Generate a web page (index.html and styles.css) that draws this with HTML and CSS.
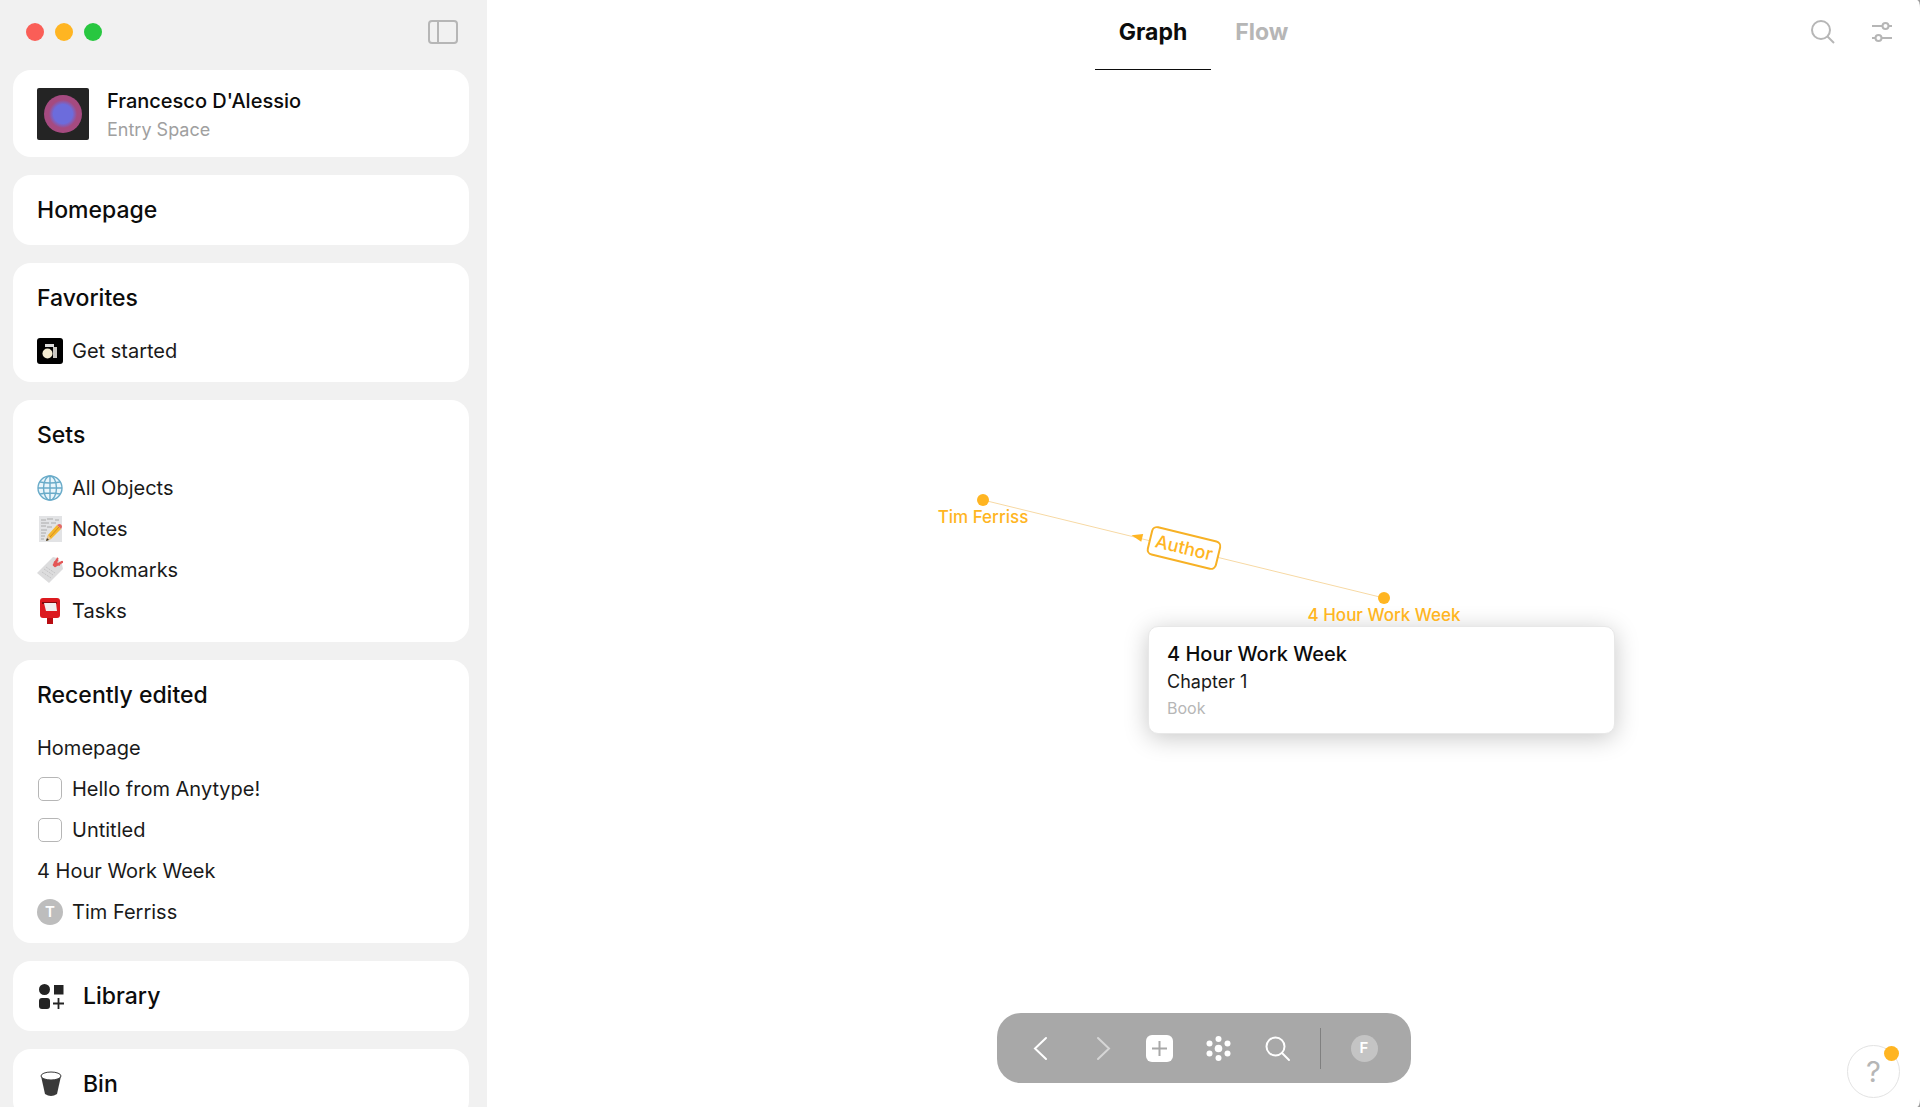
FILE: index.html
```
<!DOCTYPE html>
<html lang="en">
<head>
<meta charset="UTF-8">
<meta name="viewport" content="width=device-width, initial-scale=1.0">
<title>Graph</title>
<link rel="stylesheet" href="styles.css">
</head>
<body>
<div id="app">
    <aside class="sidebar">
        <div class="titlebar">
            <div class="lights">
                <button class="light red" aria-label="Close"></button>
                <button class="light yellow" aria-label="Minimize"></button>
                <button class="light green" aria-label="Zoom"></button>
            </div>
            <button class="toggle" aria-label="Toggle sidebar">
                <svg width="30" height="24" viewBox="0 0 30 24" fill="none" stroke="#b6b6b6" stroke-width="2"><rect x="1" y="1" width="28" height="22" rx="3"/><path d="M10 1v22"/></svg>
            </button>
        </div>
        <a href="#" class="card profile">
            <svg width="52" height="52" viewBox="0 0 52 52">
                <defs>
                    <radialGradient id="orb">
                        <stop offset=".5" stop-color="#6c6cdc"/>
                        <stop offset=".74" stop-color="#a54a80"/>
                    </radialGradient>
                </defs>
                <rect width="52" height="52" rx="2" fill="#242424"/>
                <circle cx="26" cy="26" r="19" fill="url(#orb)"/>
            </svg>
            <span class="who">
                <span class="name">Francesco D'Alessio</span>
                <span class="space">Entry Space</span>
            </span>
        </a>
        <section class="card">
            <h2><a href="#">Homepage</a></h2>
        </section>
        <section class="card list">
            <h2>Favorites</h2>
            <ul>
                <li><a href="#">
                    <svg width="26" height="26" viewBox="0 0 26 26"><rect width="26" height="26" rx="3"/><path d="M8 6h9v4H8z" fill="#ddd"/><path d="M16 9h4v11h-4z" fill="#c9c7c2"/><path d="M8 9h8v3H8z"/><circle cx="10.500" cy="15.500" r="5" fill="#f5ecd2"/></svg>
                    Get started</a></li>
            </ul>
        </section>
        <section class="card list">
            <h2>Sets</h2>
            <ul>
                <li><a href="#">
                    <svg width="26" height="26" viewBox="0 0 26 26" fill="none" stroke="#69abc9" stroke-width="1.400"><circle cx="13" cy="13" r="12" fill="#e9f5fb"/><ellipse cx="13" cy="13" rx="6.500" ry="12"/><path d="M13 1v24M1 13h24M3 7q10 2 20 0M3 19q10-2 20 0"/></svg>
                    All Objects</a></li>
                <li><a href="#">
                    <svg width="26" height="26" viewBox="0 0 26 26"><path d="M2 0h23v26H2z" fill="#e2e3e5"/><path d="M4 4h5m1-1h6m2 1h4M4 7h8m2 0h5M4 10h5m1 1h5M4 14h6M4 17h5M4 20h4m-4 3h3" stroke="#aaa" fill="none"/><path d="M9 25l2-6L20 9l4 4-10 10z" fill="#f5b82e"/><path d="M13 21l9-10" stroke="#d78c1c" fill="none"/><path d="M9 25l2-6 3 4z" fill="#e8c797"/><path d="M9 25l1-3 2 2z" fill="#333"/><path d="M20 9l2-1q3 0 3 3l-1 2z" fill="#e26a65"/></svg>
                    Notes</a></li>
                <li><a href="#">
                    <svg width="26" height="26" viewBox="0 0 26 26"><path d="M0 16L16 0l4 1 5 6 1 5-14 14z" fill="#dcdcdd"/><path d="M5 15l9 6M7 12l9 6M9 10l9 6" stroke="#c5c5c7" stroke-dasharray="2 1" fill="none"/><path d="M17 8l3-5M18 9l7-4" stroke="#e45757" stroke-width="2.500" stroke-linecap="round" fill="none"/><path d="M17 5l6 3M20 2l1-1" stroke="#e45757" stroke-width="2" fill="none"/></svg>
                    Bookmarks</a></li>
                <li><a href="#">
                    <svg width="26" height="26" viewBox="0 0 26 26"><path d="M10 18h6v8h-6z" fill="#b80d12"/><path d="M3 3q0-3 3-3h14q3 0 3 3v14q0 3-3 3H6q-3 0-3-3z" fill="#dc1a1f"/><path d="M5 4h15v2H5z" fill="#850a0d"/><path d="M7 5h12l1 8H9z" fill="#f1eeee"/></svg>
                    Tasks</a></li>
            </ul>
        </section>
        <section class="card list">
            <h2>Recently edited</h2>
            <ul>
                <li><a href="#">Homepage</a></li>
                <li><input type="checkbox" id="hello"><label for="hello">Hello from Anytype!</label></li>
                <li><input type="checkbox" id="untitled"><label for="untitled">Untitled</label></li>
                <li><a href="#">4 Hour Work Week</a></li>
                <li><a href="#"><span class="avatar">T</span>Tim Ferriss</a></li>
            </ul>
        </section>
        <section class="card">
            <h2><a href="#">
                <svg width="28" height="28" viewBox="0 0 28 28" fill="#242424"><circle cx="7.500" cy="7.500" r="5.500"/><rect x="17" y="3" width="9.500" height="9.500"/><rect x="2" y="16" width="11" height="11" rx="3"/><path d="M21.500 16v11M16 21.500h11" stroke="#242424" stroke-width="1.800"/></svg>
                Library</a></h2>
        </section>
        <section class="card">
            <h2><a href="#">
                <svg width="28" height="28" viewBox="0 0 28 28"><path d="M4 6l4 18q6 4 12 0l4-18z" fill="#3a3a3a"/><ellipse cx="14" cy="6" rx="10" ry="4" fill="#fff" stroke="#3a3a3a"/></svg>
                Bin</a></h2>
        </section>
    </aside>
    <main class="main">
        <div class="canvas">
            <div class="scene">
                <svg class="edges" width="721" height="261" viewBox="0 0 721 261">
                    <path d="M140 77L541 175" class="edge"/>
                    <circle cx="140" cy="77" r="6"/>
                    <circle cx="541" cy="175" r="6"/>
                    <g transform="translate(341 125) rotate(13.700)">
                        <path d="M-54 0l11-4v8z"/>
                        <rect x="-35" y="-14" width="70" height="28" rx="5" class="tag"/>
                        <text y="6" class="relation">Author</text>
                    </g>
                    <text x="140" y="100" class="label">Tim Ferriss</text>
                </svg>
                <div class="preview">
                    <strong>4 Hour Work Week</strong>
                    <span>Chapter 1</span>
                    <small>Book</small>
                </div>
                <svg class="edges" width="721" height="261" viewBox="0 0 721 261">
                    <text x="541" y="198">4 Hour Work Week</text>
                </svg>
            </div>
        </div>
        <header class="header">
            <nav class="tabs">
                <button class="tab active">Graph</button>
                <button class="tab">Flow</button>
            </nav>
            <div class="tools">
                <button aria-label="Search">
                    <svg width="26" height="26" viewBox="0 0 26 26" fill="none" stroke="#b6b6b6" stroke-width="2"><circle cx="11" cy="11" r="9"/><path d="M17.500 17.500L24 24"/></svg>
                </button>
                <button aria-label="Settings">
                    <svg width="26" height="26" viewBox="0 0 26 26" fill="#fff" stroke="#b6b6b6" stroke-width="2"><path d="M3 7h20M3 19h20"/><circle cx="16.500" cy="7" r="3"/><circle cx="9.500" cy="19" r="3"/></svg>
                </button>
            </div>
        </header>
        <div class="dock">
            <div class="dock-items">
                <button aria-label="Back"><svg width="27" height="27" viewBox="0 0 27 27" fill="none" stroke="#fff" stroke-width="2" stroke-linecap="round"><path d="M18 3L7 13.500 18 24"/></svg></button>
                <button aria-label="Forward" disabled><svg width="27" height="27" viewBox="0 0 27 27" fill="none" stroke="#d6d6d6" stroke-width="2" stroke-linecap="round"><path d="M11 3l11 10.500L11 24"/></svg></button>
                <button aria-label="New object"><svg width="27" height="27" viewBox="0 0 27 27"><rect width="27" height="27" rx="6" fill="#fff"/><path d="M13.500 6v15M6 13.500h15" stroke="#a8a8a8" stroke-width="2"/></svg></button>
                <button aria-label="Graph"><svg width="27" height="27" viewBox="0 0 27 27" fill="#fff"><circle cx="13.500" cy="13.500" r="3.800"/><circle cx="13.500" cy="4" r="3"/><circle cx="13.500" cy="23" r="3"/><circle cx="4.500" cy="8.500" r="3"/><circle cx="22.500" cy="8.500" r="3"/><circle cx="4.500" cy="18.500" r="3"/><circle cx="22.500" cy="18.500" r="3"/></svg></button>
                <button aria-label="Search"><svg width="27" height="27" viewBox="0 0 27 27" fill="none" stroke="#fff" stroke-width="2" stroke-linecap="round"><circle cx="11.500" cy="11.500" r="9"/><path d="M18 18l7 7"/></svg></button>
            </div>
            <span class="divider"></span>
            <button class="avatar me" aria-label="Profile">F</button>
        </div>
        <button class="help" aria-label="Help">?<span class="badge"></span></button>
    </main>
</div>
</body>
</html>
```
FILE: styles.css
```
* {box-sizing: border-box;}
body {margin: 0;background: #9a9a9a;font: 20px/26px Inter, "Liberation Sans", sans-serif;color: #1a1a1a;}
h2,ul {margin: 0;padding: 0;list-style: none;}
svg {display: block;flex: none;}
a {color: inherit;text-decoration: none;}
button {margin: 0;padding: 0;border: 0;background: none;font: inherit;color: inherit;cursor: pointer;}
#app {display: flex;height: 100vh;overflow: hidden;}

/* sidebar */
.sidebar {flex: none;display: flex;flex-direction: column;gap: 18px;width: 487px;padding: 0 18px 18px 13px;background: #f1f1f1;overflow: hidden;}
.titlebar {flex: none;display: flex;justify-content: space-between;align-items: center;height: 52px;padding: 12px 11px 0 13px;}
.lights {display: flex;gap: 11px;}
.light {width: 18px;height: 18px;border-radius: 50%;}
.red {background: #fa5e57;}
.yellow {background: #ffb522;}
.green {background: #28c740;}
.card {flex: none;padding: 22px 24px;border-radius: 18px;background: #fff;}
.card h2 {font-size: 23px;line-height: 26px;font-weight: 550;color: #0c0c0c;}
.card h2 a {display: flex;align-items: center;gap: 18px;height: 26px;}
.profile {display: flex;gap: 18px;padding: 18px 24px 16px;}
.who {display: flex;flex-direction: column;gap: 5px;}
.name {font-weight: 450;color: #0c0c0c;}
.space {font-size: 18px;line-height: 22px;color: #a0a0a0;}
.list {padding-bottom: 11px;}
.list ul {margin-top: 19px;}
.list li,.list li a {display: flex;align-items: center;gap: 9px;height: 41px;}
.list input {appearance: none;width: 24px;height: 24px;margin: 0 1px;border: 1px solid #b6b6b6;border-radius: 5px;background: #fff;}
.avatar {display: flex;justify-content: center;align-items: center;width: 26px;height: 26px;border-radius: 50%;background: #bdbdbd;font-size: 15px;font-weight: 600;color: #fff;}

/* graph */
.main {position: relative;flex: 1;min-width: 0;background: #fff;border-radius: 0 3px 3px 0 / 0 8px 8px 0;}
.header {position: relative;display: flex;justify-content: center;height: 70px;}
.tabs {display: flex;}
.tab {padding: 0 24px 6px;border-bottom: 1px solid transparent;font-size: 23px;font-weight: 650;color: #b6b6b6;}
.tab.active {border-color: #0c0c0c;color: #0c0c0c;}
.tools {position: absolute;right: 25px;top: 19px;display: flex;gap: 33px;}
.canvas {position: absolute;inset: 0;display: grid;place-items: center;overflow: hidden;}
.scene {position: relative;width: 721px;height: 261px;}
.edges {position: absolute;left: 0;top: 0;fill: #ffb522;font-size: 17px;font-weight: 500;text-anchor: middle;}
.edge {fill: none;stroke: #f7d9a4;}
.tag {fill: #fff;stroke: #f7b125;stroke-width: 2;}
.relation {font-size: 18px;}
.label {stroke: #fff;stroke-width: 3;paint-order: stroke;}
.preview {position: absolute;left: 305px;top: 203px;display: flex;flex-direction: column;width: 467px;padding: 14px 18px 12px;border: 1px solid #e8e8e8;border-radius: 10px;background: #fff;box-shadow: 0 4px 24px rgba(0, 0, 0, .22);}
.preview strong {font-weight: 450;line-height: 27px;color: #0c0c0c;}
.preview span {font-size: 18px;line-height: 27px;}
.preview small {font-size: 16px;line-height: 26px;color: #b6b6b6;}

/* bottom dock */
.dock {position: absolute;left: 50%;bottom: 24px;transform: translateX(-50%);display: flex;align-items: center;height: 70px;padding: 0 33px 0 31px;border-radius: 24px;background: #a8a8a8;}
.dock-items {display: flex;gap: 32px;}
.divider {width: 1px;height: 41px;margin: 0 30px 0 29px;background: #808080;}
.me {width: 27px;height: 27px;background: #c4c4c4;}
.help {position: absolute;right: 20px;bottom: 9px;width: 53px;height: 53px;border: 1px solid #e3e3e3;border-radius: 50%;background: #fff;font-size: 29px;color: #b6b6b6;}
.badge {position: absolute;right: 0;top: 0;width: 15px;height: 15px;border-radius: 50%;background: #ffb522;}
```
